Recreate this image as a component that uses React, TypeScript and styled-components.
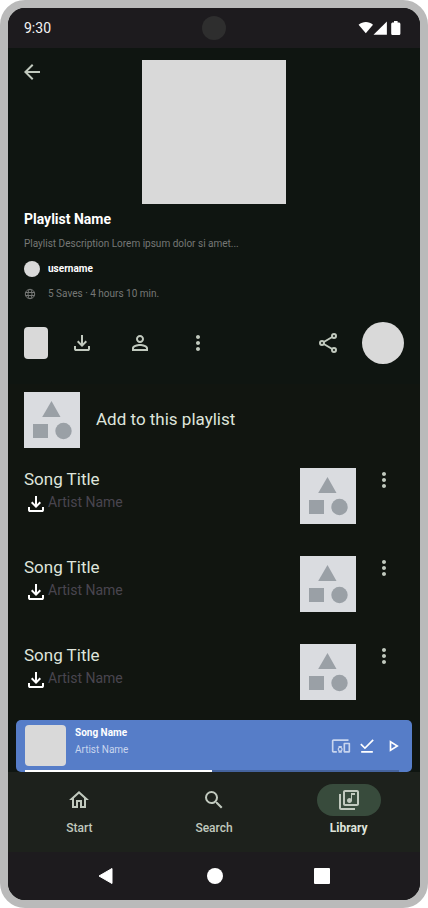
import React from "react";
import styled, { createGlobalStyle } from "styled-components";

const GlobalStyle = createGlobalStyle`
  *, *::before, *::after { box-sizing: border-box; }
  body { margin: 0; background: #ffffff; font-family: Roboto, "Liberation Sans", sans-serif; }
  button { font: inherit; color: inherit; background: none; border: 0; padding: 0; cursor: pointer; }
  h1, h2, p, ul { margin: 0; padding: 0; }
  ul { list-style: none; }
  a { color: inherit; text-decoration: none; }
  svg { display: block; }
`;

const Device = styled.div`
  display: flex;
  flex-direction: column;
  min-height: 100vh;
  border: 8px solid #bababa;
  border-radius: 25px;
  background: #0f1511;
  overflow: hidden;
`;

const StatusBar = styled.header`
  display: grid;
  grid-template-columns: 1fr 24px 1fr;
  align-items: center;
  height: 40px;
  padding: 0 16px;
  background: #1d1b1e;
  color: #f4f4f4;
  font-size: 14px;
  line-height: 20px;
`;

const Camera = styled.span`
  width: 24px;
  height: 24px;
  border-radius: 50%;
  background: #2e2e2e;
`;

const StatusIcons = styled.div`
  justify-self: end;
  color: #ffffff;
`;

const Main = styled.main`
  flex: 1;
`;

const Hero = styled.div`
  display: grid;
  grid-template-columns: 1fr 144px 1fr;
  align-items: start;
  padding: 12px 12px 0;
`;

const IconButton = styled.button<{ $color?: string }>`
  display: grid;
  place-items: center;
  flex: none;
  width: 24px;
  height: 24px;
  color: ${(p) => p.$color ?? "#c1c9be"};
`;

const Cover = styled.div`
  height: 144px;
  background: #d9d9d9;
`;

const Details = styled.section`
  padding: 3px 16px 0;
`;

const PlaylistName = styled.h1`
  color: #ffffff;
  font-size: 14px;
  font-weight: 700;
  line-height: 24px;
`;

const DetailLine = styled.div<{ $strong?: boolean }>`
  display: flex;
  align-items: center;
  gap: 8px;
  height: 25px;
  color: ${(p) => (p.$strong ? "#ffffff" : "#767876")};
  font-size: 10px;
  font-weight: ${(p) => (p.$strong ? 700 : 400)};
`;

const Avatar = styled.span`
  width: 16px;
  height: 16px;
  border-radius: 50%;
  background: #d9d9d9;
`;

const GlobeSlot = styled.span`
  display: grid;
  place-items: center start;
  width: 16px;
`;

const Actions = styled.div`
  display: flex;
  align-items: center;
  justify-content: space-between;
  margin-top: 16px;
  padding: 0 16px;
`;

const ActionGroup = styled.div<{ $gap: number }>`
  display: flex;
  align-items: center;
  gap: ${(p) => p.$gap}px;
`;

const Preview = styled.button`
  width: 24px;
  height: 32px;
  margin-right: -12px;
  border-radius: 4px;
  && { background: #d9d9d9; }
`;

const PlayButton = styled.button`
  width: 42px;
  height: 42px;
  border-radius: 50%;
  && { background: #d9d9d9; }
`;

const List = styled.ul`
  margin-top: 20px;
  background: #111510;
`;

const AddButton = styled.button`
  display: flex;
  align-items: center;
  gap: 16px;
  width: 100%;
  padding: 8px 16px;
  text-align: left;
`;

const SongRow = styled.li`
  display: flex;
  align-items: flex-start;
  gap: 16px;
  padding: 12px 24px 20px 16px;
`;

const SongText = styled.div`
  flex: 1;
`;

const ItemTitle = styled.h2`
  && { padding-bottom: 2px; }
  color: #dfe4db;
  font-size: 17px;
  font-weight: 400;
  line-height: 22px;
`;

const ArtistLine = styled.div`
  display: flex;
  align-items: flex-start;
  color: #ffffff;
`;

const Artist = styled.p`
  color: #49454f;
  font-size: 14px;
  line-height: 20px;
`;

const Thumb = styled.span`
  flex: none;
  width: 56px;
  height: 56px;
  background: #dadce0;
`;

const Player = styled.section`
  display: grid;
  grid-template-columns: 41px 1fr auto;
  column-gap: 9px;
  margin: 0 8px;
  padding: 5px 7px 0 9px;
  border-radius: 5px;
  background: #567dc8;
`;

const PlayerArt = styled.div`
  height: 41px;
  border-radius: 4px;
  background: #d9d9d9;
`;

const PlayerText = styled.div`
  color: #c8d5ee;
  font-size: 10px;
  line-height: 17px;
`;

const PlayerTitle = styled.h2`
  color: #ffffff;
  font-size: 10px;
  font-weight: 700;
  line-height: 16px;
`;

const PlayerControls = styled.div`
  display: flex;
  align-items: center;
  gap: 2px;
  color: #ffffff;
`;

const Track = styled.div`
  grid-column: 1 / -1;
  height: 2px;
  margin: 4px 6px 0 0;
  background: #45639d;
`;

const Elapsed = styled.div`
  height: 2px;
  background: #ffffff;
`;

const NavBar = styled.nav`
  display: grid;
  grid-template-columns: repeat(3, 1fr);
  gap: 8px;
  padding: 12px 8px 16px;
  background: #1d211c;
`;

const NavItem = styled.a<{ $active?: boolean }>`
  display: flex;
  flex-direction: column;
  align-items: center;
  gap: 4px;
  color: ${(p) => (p.$active ? "#dfe4db" : "#c1c9be")};
  font-size: 12px;
  font-weight: ${(p) => (p.$active ? 700 : 500)};
  line-height: 16px;
`;

const Pill = styled.span<{ $active?: boolean }>`
  display: grid;
  place-items: center;
  width: 64px;
  height: 32px;
  border-radius: 16px;
  color: #c1c9be;
  background: ${(p) => (p.$active ? "#384b3c" : "transparent")};
`;

const SystemBar = styled.footer`
  display: flex;
  align-items: center;
  justify-content: center;
  gap: 84px;
  height: 48px;
  background: #1d1b1e;
`;

const paths = {
  back: "M20 11H7.83l5.59-5.59L12 4l-8 8 8 8 1.41-1.41L7.83 13H20z",
  download:
    "M12 16l-5-5 1.4-1.45 2.6 2.6V4h2v8.15l2.6-2.6L17 11zM6 20q-.825 0-1.412-.587T4 18v-3h2v3h12v-3h2v3q0 .825-.587 1.413T18 20z",
  person:
    "M12 6c1.1 0 2 .9 2 2s-.9 2-2 2-2-.9-2-2 .9-2 2-2m0 9c2.7 0 5.8 1.29 6 2v1H6v-.99c.2-.72 3.3-2.01 6-2.01m0-11C9.79 4 8 5.79 8 8s1.79 4 4 4 4-1.79 4-4-1.79-4-4-4zm0 9c-2.67 0-8 1.34-8 4v3h16v-3c0-2.66-5.33-4-8-4z",
  more: "M12 8c1.1 0 2-.9 2-2s-.9-2-2-2-2 .9-2 2 .9 2 2 2zm0 2c-1.1 0-2 .9-2 2s.9 2 2 2 2-.9 2-2-.9-2-2-2zm0 6c-1.1 0-2 .9-2 2s.9 2 2 2 2-.9 2-2-.9-2-2-2z",
  home: "M12 5.69l5 4.5V18h-2v-6H9v6H7v-7.81l5-4.5M12 3L2 12h3v8h6v-6h2v6h6v-8h3L12 3z",
  search:
    "M15.5 14h-.79l-.28-.27A6.471 6.471 0 0 0 16 9.5 6.5 6.5 0 1 0 9.5 16c1.61 0 3.09-.59 4.23-1.57l.27.28v.79l5 4.99L20.49 19l-4.99-5zm-6 0C7.01 14 5 11.99 5 9.5S7.01 5 9.5 5 14 7.01 14 9.5 11.99 14 9.5 14z",
  library:
    "M20 2H8c-1.1 0-2 .9-2 2v12c0 1.1.9 2 2 2h12c1.1 0 2-.9 2-2V4c0-1.1-.9-2-2-2zm0 14H8V4h12v12zM12.5 15c1.38 0 2.5-1.12 2.5-2.5V7h3V5h-4v5.51c-.42-.32-.93-.51-1.5-.51-1.38 0-2.5 1.12-2.5 2.5s1.12 2.5 2.5 2.5zM4 6H2v14c0 1.1.9 2 2 2h14v-2H4V6z",
  devices:
    "M3 6h18V4H3c-1.1 0-2 .9-2 2v12c0 1.1.9 2 2 2h4v-2H3V6zm10 6H9v1.78c-.61.55-1 1.33-1 2.22s.39 1.67 1 2.22V20h4v-1.78c.61-.55 1-1.34 1-2.22s-.39-1.67-1-2.22V12zm-2 5.5c-.83 0-1.5-.67-1.5-1.5s.67-1.5 1.5-1.5 1.5.67 1.5 1.5-.67 1.5-1.5 1.5zM22 8h-6c-.5 0-1 .5-1 1v10c0 .5.5 1 1 1h6c.5 0 1-.5 1-1V9c0-.5-.5-1-1-1zm-1 10h-4v-8h4v8z",
  done: "M20.13 5.41L18.72 4l-9.19 9.19-4.25-4.24-1.41 1.41 5.66 5.66zM5 18h14v2H5z",
  play: "M10 8.64L15.27 12 10 15.36V8.64M8 5v14l11-7L8 5z",
};

function Icon({ name, size = 24 }: { name: keyof typeof paths; size?: number }) {
  return (
    <svg width={size} height={size} viewBox="0 0 24 24" fill="currentColor" aria-hidden="true">
      <path d={paths[name]} />
    </svg>
  );
}

function ShareIcon() {
  return (
    <svg width="24" height="24" viewBox="0 0 24 24" fill="none" stroke="currentColor" strokeWidth="2" aria-hidden="true">
      <circle cx="18" cy="5" r="2" />
      <circle cx="6" cy="12" r="2" />
      <circle cx="18" cy="19" r="2" />
      <path d="M7.8 11l8.4-5M7.8 13l8.4 5" />
    </svg>
  );
}

function ShapesThumb() {
  return (
    <Thumb>
      <svg width="56" height="56" viewBox="0 0 56 56" fill="#9aa0a6" aria-hidden="true">
        <path d="M27.500 9L36.500 25H18.200z" />
        <path d="M9 32h15v14H9z" />
        <circle cx="39.500" cy="39" r="8.200" />
      </svg>
    </Thumb>
  );
}

const songs = [1, 2, 3];

export default function App() {
  return (
    <>
      <GlobalStyle />
      <Device>
        <StatusBar>
          <span>9:30</span>
          <Camera />
          <StatusIcons>
            <svg width="46" height="16" viewBox="0 0 46 16" fill="currentColor" aria-hidden="true">
              <path d="M.6 4.700C5 1.200 10.800 1.200 15 4.700L7.800 13.200z" />
              <path d="M15.500 14.800L28.900 1.400v13.400z" />
              <path d="M36 1h3.600v1.400h1.200c.9 0 1.600.7 1.600 1.600v9.400c0 .9-.7 1.600-1.600 1.600h-6c-.9 0-1.600-.7-1.600-1.600V4c0-.9.7-1.600 1.600-1.600H36z" />
            </svg>
          </StatusIcons>
        </StatusBar>

        <Main>
          <Hero>
            <IconButton aria-label="Back"><Icon name="back" /></IconButton>
            <Cover />
          </Hero>

          <Details>
            <PlaylistName>Playlist Name</PlaylistName>
            <DetailLine>Playlist Description Lorem ipsum dolor si amet...</DetailLine>
            <DetailLine $strong>
              <Avatar />
              username
            </DetailLine>
            <DetailLine>
              <GlobeSlot>
                <svg width="12" height="12" viewBox="0 0 12 12" fill="none" stroke="currentColor" aria-hidden="true">
                  <circle cx="6" cy="6" r="4.700" />
                  <ellipse cx="6" cy="6" rx="2" ry="4.700" />
                  <path d="M1.500 4.500h9M1.500 7.500h9" />
                </svg>
              </GlobeSlot>
              5 Saves · 4 hours 10 min.
            </DetailLine>
          </Details>

          <Actions>
            <ActionGroup $gap={34}>
              <Preview aria-label="Preview playlist" />
              <IconButton aria-label="Download playlist"><Icon name="download" /></IconButton>
              <IconButton aria-label="Collaborators"><Icon name="person" /></IconButton>
              <IconButton aria-label="More options"><Icon name="more" /></IconButton>
            </ActionGroup>
            <ActionGroup $gap={22}>
              <IconButton aria-label="Share"><ShareIcon /></IconButton>
              <PlayButton aria-label="Play" />
            </ActionGroup>
          </Actions>

          <List>
            <li>
              <AddButton>
                <ShapesThumb />
                <ItemTitle as="span">Add to this playlist</ItemTitle>
              </AddButton>
            </li>
            {songs.map((id) => (
              <SongRow key={id}>
                <SongText>
                  <ItemTitle>Song Title</ItemTitle>
                  <ArtistLine>
                    <Icon name="download" />
                    <Artist>Artist Name</Artist>
                  </ArtistLine>
                </SongText>
                <ShapesThumb />
                <IconButton aria-label="Song options"><Icon name="more" /></IconButton>
              </SongRow>
            ))}
          </List>
        </Main>

        <Player aria-label="Now playing">
          <PlayerArt />
          <PlayerText>
            <PlayerTitle>Song Name</PlayerTitle>
            <p>Artist Name</p>
          </PlayerText>
          <PlayerControls>
            <IconButton $color="#c8d5ee" aria-label="Devices"><Icon name="devices" size={20} /></IconButton>
            <IconButton $color="#ffffff" aria-label="Saved"><Icon name="done" size={20} /></IconButton>
            <IconButton $color="#ffffff" aria-label="Play song"><Icon name="play" size={20} /></IconButton>
          </PlayerControls>
          <Track>
            <Elapsed style={{ width: "50%" }} />
          </Track>
        </Player>

        <NavBar>
          <NavItem href="#start">
            <Pill><Icon name="home" /></Pill>
            Start
          </NavItem>
          <NavItem href="#search">
            <Pill><Icon name="search" /></Pill>
            Search
          </NavItem>
          <NavItem href="#library" $active aria-current="page">
            <Pill $active><Icon name="library" /></Pill>
            Library
          </NavItem>
        </NavBar>

        <SystemBar>
          <IconButton $color="#ffffff" aria-label="System back">
            <svg width="24" height="24" viewBox="0 0 24 24" fill="currentColor" stroke="currentColor" strokeLinejoin="round" aria-hidden="true">
              <path d="M18 4.500v15L5 12z" />
            </svg>
          </IconButton>
          <IconButton $color="#ffffff" aria-label="System home">
            <svg width="24" height="24" viewBox="0 0 24 24" fill="currentColor" aria-hidden="true">
              <circle cx="13" cy="12" r="8" />
            </svg>
          </IconButton>
          <IconButton $color="#ffffff" aria-label="Recent apps">
            <svg width="24" height="24" viewBox="0 0 24 24" fill="currentColor" aria-hidden="true">
              <rect x="4" y="4" width="16" height="16" rx="1" />
            </svg>
          </IconButton>
        </SystemBar>
      </Device>
    </>
  );
}
